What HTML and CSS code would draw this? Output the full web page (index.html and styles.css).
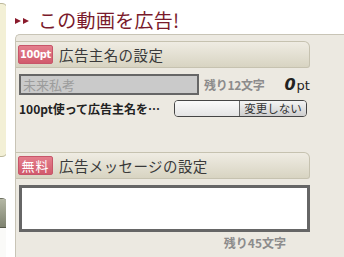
FILE: index.html
```html
<!DOCTYPE html>
<html lang="ja">

<head>
    <meta charset="UTF-8">
    <meta name="viewport" content="width=device-width, initial-scale=1.0">
    <title>この動画を広告!</title>
    <link rel="stylesheet" href="styles.css">
</head>

<body>
    <div class="page">
        <div class="side">
            <div class="side-box note"></div>
            <div class="side-box menu">
                <div class="menu-head"></div>
            </div>
        </div>

        <div class="main">
            <h1 class="title"><span class="arrows"><i></i><i></i></span>この動画を広告!</h1>

            <div class="panel">
                <div class="sec-head">
                    <span class="badge">100pt</span>
                    <span class="sec-title">広告主名の設定</span>
                </div>
                <div class="row name-row">
                    <div class="field name-field">未来私考</div>
                    <span class="remain">残り12文字</span>
                    <span class="cost"><b>0</b>pt</span>
                </div>
                <div class="row use-row">
                    <span class="use-label">100pt使って広告主名を…</span>
                    <div class="toggle">
                        <span class="toggle-blank"></span>
                        <span class="toggle-btn">変更しない</span>
                    </div>
                </div>

                <div class="sec-head sec-msg">
                    <span class="badge">無料</span>
                    <span class="sec-title">広告メッセージの設定</span>
                </div>
                <div class="field msg-field"></div>
                <div class="remain msg-remain">残り45文字</div>
            </div>
        </div>
    </div>
</body>

</html>
```

FILE: styles.css
```css
body {
    margin: 0;
    padding: 0;
    background: #ffffff;
    font-family: "Noto Sans CJK JP", "DejaVu Sans", sans-serif;
    color: #333;
    overflow: hidden;
}

.page {
    display: flex;
    width: 344px;
    height: 257px;
}

/* left column: only the right edge of its boxes shows */
.side {
    width: 6px;
    flex-shrink: 0;
    overflow: hidden;
}

.side-box {
    width: 100px;
    margin-left: -94px;
    border: 1px solid #bdb99c;
    border-radius: 6px;
}

.note {
    margin-top: 3px;
    height: 152px;
    background: #f3f0d6;
}

.menu {
    margin-top: 41px;
    height: 80px;
    background: #fafaf8;
    border-color: #6d7060;
}

.menu-head {
    height: 28px;
    border-radius: 5px 5px 0 0;
    border-bottom: 1px solid #55584a;
    background: linear-gradient(#b4b7a4, #7f8370);
}

.main {
    margin-left: 9px;
    flex: 1;
    display: flex;
    flex-direction: column;
}

.title {
    margin: 0;
    height: 34px;
    flex-shrink: 0;
    box-sizing: border-box;
    padding-top: 4px;
    display: flex;
    align-items: center;
    font-size: 19px;
    font-weight: normal;
    color: #7a1a2b;
    letter-spacing: 0.3px;
}

.arrows {
    display: flex;
    gap: 2px;
    margin-right: 9px;
    margin-top: 3px;
}

.arrows i {
    width: 0;
    height: 0;
    border-top: 3.5px solid transparent;
    border-bottom: 3.5px solid transparent;
    border-left: 6px solid #8a1a2c;
}

.panel {
    flex: 1;
    background: #ece9e1;
    border-top: 1px solid #c8c4b6;
    border-left: 1px solid #c8c4b6;
    border-top-left-radius: 5px;
    padding: 6px 34px 0 0;
}

.sec-head {
    height: 25px;
    display: flex;
    align-items: center;
    padding-left: 2px;
    border: 1px solid #c6c2b0;
    border-left: none;
    border-radius: 0 6px 3px 0;
    background: linear-gradient(#efece3, #d8d4c2);
}

.badge {
    width: 33px;
    height: 17px;
    flex-shrink: 0;
    display: flex;
    align-items: center;
    justify-content: center;
    border: 1px solid #c7566a;
    border-radius: 2px;
    background: linear-gradient(#e47f8d, #d15a6c);
    color: #fff;
    font-family: "DejaVu Sans Condensed", "DejaVu Sans", sans-serif;
    font-weight: bold;
    font-size: 11px;
    letter-spacing: -0.3px;
}

.sec-msg .badge {
    font-family: "Noto Sans CJK JP", sans-serif;
    font-weight: normal;
    font-size: 13px;
    letter-spacing: 1px;
}

.sec-title {
    margin-left: 6px;
    font-size: 14.5px;
    color: #3a3a3a;
    letter-spacing: 0.4px;
}

.row {
    display: flex;
    align-items: center;
    padding-left: 3px;
    white-space: nowrap;
}

.name-row {
    margin-top: 6px;
}

.field {
    box-sizing: border-box;
    border: 2px solid #666;
}

.name-field {
    width: 180px;
    height: 21px;
    flex-shrink: 0;
    padding-left: 2px;
    background: #cacaca;
    color: #9c9c9c;
    font-size: 13px;
    line-height: 17px;
}

.remain {
    color: #8c8c8c;
    font-size: 12px;
    font-weight: bold;
    white-space: nowrap;
}

.name-row .remain {
    margin-left: 5px;
    letter-spacing: -0.3px;
}

.cost {
    margin-left: 20px;
    font-family: "DejaVu Sans", sans-serif;
    font-size: 13px;
    color: #222;
}

.cost b {
    font-style: italic;
    font-size: 16px;
    margin-right: 1px;
}

.use-row {
    margin-top: 5px;
    justify-content: space-between;
    padding-right: 3px;
}

.use-label {
    font-size: 12px;
    font-weight: bold;
    color: #222;
}

.toggle {
    width: 133px;
    height: 17px;
    flex-shrink: 0;
    box-sizing: border-box;
    display: flex;
    border: 1px solid #444;
    border-radius: 4px;
    overflow: hidden;
}

.toggle-blank {
    flex: 1;
    background: linear-gradient(#fafafa, #e4e4e4);
}

.toggle-btn {
    width: 66px;
    border-left: 1px solid #666;
    background: linear-gradient(#f4f4f4, #cfcfcf);
    font-size: 11.5px;
    line-height: 15px;
    text-align: center;
    color: #333;
}

.sec-msg {
    margin-top: 35px;
}

.msg-field {
    margin: 6px 0 0 3px;
    height: 47px;
    border-width: 3px;
    background: #fff;
}

.msg-remain {
    margin-top: 2px;
    padding-right: 24px;
    text-align: right;
}
```
